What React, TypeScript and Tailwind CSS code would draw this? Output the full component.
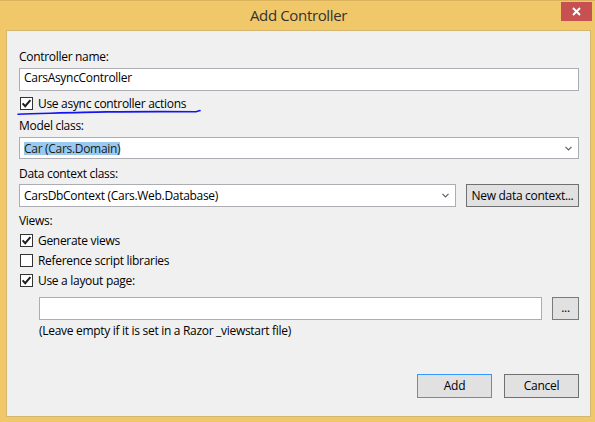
import React from "react";

const font = { fontFamily: '"Open Sans", "Noto Sans", sans-serif' };

function Check({ checked }: { checked: boolean }) {
  return (
    <span className="w-[13px] h-[13px] border border-[#333333] bg-white flex items-center justify-center shrink-0">
      {checked && (
        <svg width="11" height="11" viewBox="0 0 11 11">
          <path d="M1.6 5.4 L4.2 8.2 L9.4 2.2" fill="none" stroke="#1e1e1e" strokeWidth="2" />
        </svg>
      )}
    </span>
  );
}

function Arrow() {
  return (
    <svg width="7" height="5" viewBox="0 0 7 5" className="shrink-0">
      <path d="M0.5 0.8 L3.5 3.8 L6.5 0.8" fill="none" stroke="#606060" strokeWidth="1.2" />
    </svg>
  );
}

function CheckRow({ checked, label, className }: { checked: boolean; label: string; className?: string }) {
  return (
    <div className={"flex items-center h-[13px] pl-[1px] " + (className ?? "")}>
      <Check checked={checked} />
      <span className="ml-[5px] leading-[16px] text-black">{label}</span>
    </div>
  );
}

export default function App() {
  return (
    <div
      className="w-[595px] h-[422px] bg-[#F0C86A] border-t border-[#D9B25B] flex flex-col relative overflow-hidden text-[12px] tracking-[-0.3px] text-black"
      style={font}
    >
      {/* Title bar */}
      <div className="h-[29px] flex items-center justify-center shrink-0">
        <span className="text-[15px] text-[#333333] leading-[20px] tracking-[-0.35px] pl-[2px] pb-[1px]">Add Controller</span>
      </div>
      <div className="absolute top-[1px] right-[3px] w-[31px] h-[19px] bg-[#C75050] flex items-center justify-center">
        <svg width="9" height="9" viewBox="0 0 9 9">
          <path d="M1 1 L8 8 M8 1 L1 8" stroke="#ffffff" strokeWidth="2" />
        </svg>
      </div>

      {/* Client panel */}
      <div className="ml-[6px] w-[585px] h-[387px] bg-[#F0F0F0] border border-[#D3B670] flex flex-col pl-[12px] pr-[11px] pt-[18px] relative">
        <div className="leading-[16px]">Controller name:</div>
        <div className="mt-[3px] h-[23px] border border-[#ABADB3] bg-white flex items-start pl-[4px]">
          <span className="leading-[16px] mt-[1px]">CarsAsyncController</span>
        </div>
        <CheckRow checked className="mt-[6px]" label="Use async controller actions" />

        <div className="mt-[8px] leading-[16px]">Model class:</div>
        <div className="mt-[3px] h-[22px] border border-[#ABADB3] bg-white flex items-center pl-[4px] pr-[6px]">
          <span className="leading-[13px] h-[13px] bg-[#99C9EF] text-[#1b1b1b] flex items-center">Car (Cars.Domain)</span>
          <span className="flex-1" />
          <Arrow />
        </div>

        <div className="mt-[7px] leading-[16px]">Data context class:</div>
        <div className="mt-[2px] flex gap-[10px]">
          <div className="w-[437px] h-[23px] border border-[#ABADB3] bg-white flex items-center pl-[4px] pr-[6px]">
            <span className="leading-[16px] flex-1">CarsDbContext (Cars.Web.Database)</span>
            <Arrow />
          </div>
          <div className="w-[113px] h-[23px] border border-[#707070] bg-[#E1E1E1] flex items-center justify-center">
            <span className="leading-[16px]">New data context...</span>
          </div>
        </div>

        <div className="mt-[6px] leading-[16px]">Views:</div>
        <CheckRow checked className="mt-[5px]" label="Generate views" />
        <CheckRow checked={false} className="mt-[7px]" label="Reference script libraries" />
        <CheckRow checked className="mt-[7px]" label="Use a layout page:" />

        <div className="mt-[10px] flex pl-[20px] gap-[10px]">
          <div className="w-[503px] h-[23px] border border-[#ABADB3] bg-white" />
          <div className="w-[27px] h-[23px] border border-[#7A7A7A] bg-[#E1E1E1] flex items-center justify-center">
            <span className="leading-[16px] pb-[2px]">...</span>
          </div>
        </div>
        <div className="mt-[3px] pl-[20px] leading-[16px]">(Leave empty if it is set in a Razor _viewstart file)</div>

        <div className="mt-[35px] flex justify-end gap-[12px]">
          <div className="w-[75px] h-[24px] border border-[#3399FF] bg-[#E1E1E1] flex items-center justify-center">
            <span className="leading-[16px]">Add</span>
          </div>
          <div className="w-[75px] h-[24px] border border-[#707070] bg-[#E1E1E1] flex items-center justify-center">
            <span className="leading-[16px]">Cancel</span>
          </div>
        </div>

        {/* hand-drawn annotation underline */}
        <svg className="absolute left-0 top-0 pointer-events-none" width="585" height="120" viewBox="0 0 585 120">
          <path
            d="M11 83.2 C 40 82.5, 70 81.3, 100 80.9 S 170 80.6, 189 80.7 L 193 79.6"
            fill="none"
            stroke="#1414f0"
            strokeWidth="1.6"
            strokeLinecap="round"
          />
        </svg>
      </div>
    </div>
  );
}
